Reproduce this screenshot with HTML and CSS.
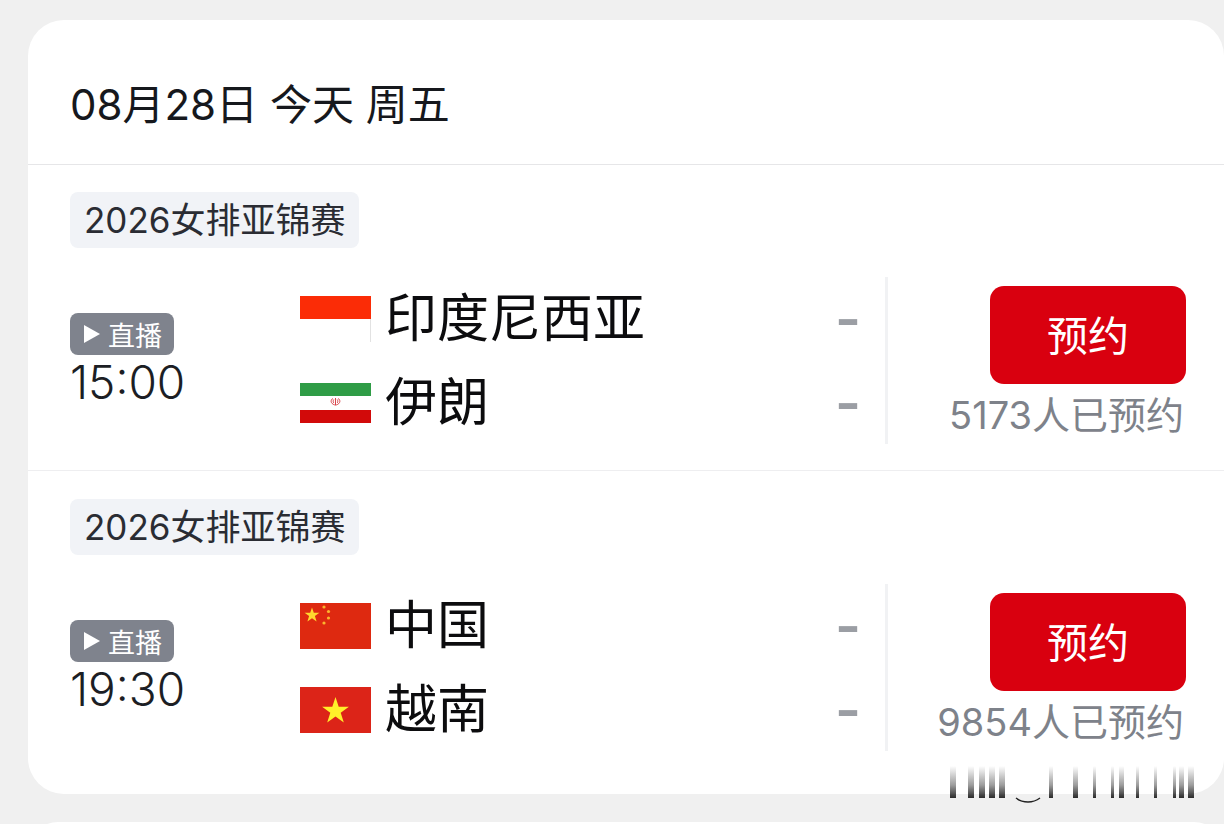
FILE: index.html
```html
<!DOCTYPE html>
<html lang="zh">
<head>
    <meta charset="UTF-8">
    <meta name="viewport" content="width=device-width, initial-scale=1.0">
    <title>赛程</title>
    <link rel="stylesheet" href="styles.css">
</head>
<body>

<section class="card">
    <header class="day-title">08月28日 今天 周五</header>

    <div class="match-block">
        <span class="tag">2026女排亚锦赛</span>
        <div class="match">
            <div class="time-col">
                <span class="live">
                    <svg class="live-icon" viewBox="0 0 16 18"><polygon points="0,0 16,9 0,18"/></svg>直播
                </span>
                <div class="time">15:00</div>
            </div>
            <div class="teams">
                <div class="team">
                    <svg class="flag" viewBox="0 0 71 46">
                        <rect width="71" height="23" fill="#fb2c06"/>
                        <rect x="70" y="23" width="1" height="23" fill="#e2e2e2"/>
                    </svg>
                    <span class="team-name">印度尼西亚</span>
                    <span class="score">-</span>
                </div>
                <div class="team">
                    <svg class="flag" viewBox="0 0 71 46">
                        <rect y="3" width="71" height="13" fill="#2f9c46"/>
                        <rect y="30" width="71" height="13" fill="#d20a0a"/>
                        <path d="M33 18.500c-2.500 1-3 5 1.800 6.500M38 18.500c2.500 1 3 5-1.800 6.500M35.500 18v7.500M33.800 19.500c-.8 1-.8 2.500 0 3.500M37.200 19.500c.8 1 .8 2.500 0 3.500" fill="none" stroke="#d9434a" stroke-width="1"/>
                    </svg>
                    <span class="team-name">伊朗</span>
                    <span class="score">-</span>
                </div>
            </div>
            <div class="book-col">
                <button class="book-btn">预约</button>
                <div class="book-count">5173人已预约</div>
            </div>
        </div>
    </div>

    <div class="match-block">
        <span class="tag">2026女排亚锦赛</span>
        <div class="match">
            <div class="time-col">
                <span class="live">
                    <svg class="live-icon" viewBox="0 0 16 18"><polygon points="0,0 16,9 0,18"/></svg>直播
                </span>
                <div class="time">19:30</div>
            </div>
            <div class="teams">
                <div class="team">
                    <svg class="flag" viewBox="0 0 71 46">
                        <rect width="71" height="46" fill="#de2910"/>
                        <polygon points="12,4.500 13.800,9.800 19.400,9.800 14.900,13.100 16.600,18.400 12,15.200 7.400,18.400 9.100,13.100 4.600,9.800 10.200,9.800" fill="#ffd82e"/>
                        <circle cx="24" cy="4" r="1.600" fill="#fbb52e"/>
                        <circle cx="28.500" cy="8.500" r="1.600" fill="#fbb52e"/>
                        <circle cx="28.500" cy="15" r="1.600" fill="#fbb52e"/>
                        <circle cx="24" cy="20" r="1.600" fill="#fbb52e"/>
                    </svg>
                    <span class="team-name">中国</span>
                    <span class="score">-</span>
                </div>
                <div class="team">
                    <svg class="flag" viewBox="0 0 71 46">
                        <rect width="71" height="46" fill="#dc2418"/>
                        <polygon points="35.500,10 38.700,19.700 48.900,19.700 40.700,25.700 43.800,35.400 35.500,29.400 27.200,35.400 30.300,25.700 22.100,19.700 32.300,19.700" fill="#fff02a"/>
                    </svg>
                    <span class="team-name">越南</span>
                    <span class="score">-</span>
                </div>
            </div>
            <div class="book-col">
                <button class="book-btn">预约</button>
                <div class="book-count">9854人已预约</div>
            </div>
        </div>
    </div>
</section>

<div class="next-peek"><div class="next-card"></div></div>

<svg class="watermark" width="250" height="42" viewBox="0 0 250 42">
    <defs>
        <linearGradient id="fade" x1="0" y1="0" x2="0" y2="1">
            <stop offset="0" stop-color="#222" stop-opacity="0"/>
            <stop offset="0.6" stop-color="#222" stop-opacity="0.45"/>
            <stop offset="1" stop-color="#222" stop-opacity="0.95"/>
        </linearGradient>
    </defs>
    <g fill="url(#fade)">
        <rect x="3" y="4" width="6" height="32"/>
        <rect x="21" y="4" width="6" height="32"/>
        <rect x="32" y="4" width="6" height="32"/>
        <rect x="42" y="4" width="6" height="32"/>
        <rect x="52" y="4" width="6" height="32"/>
        <rect x="102" y="4" width="4" height="32"/>
        <rect x="126" y="4" width="5" height="32"/>
        <rect x="146" y="4" width="3" height="32"/>
        <rect x="164" y="4" width="3" height="32"/>
        <rect x="172" y="4" width="5" height="32"/>
        <rect x="189" y="4" width="3" height="32"/>
        <rect x="207" y="4" width="3" height="32"/>
        <rect x="226" y="4" width="3" height="32"/>
        <rect x="232" y="4" width="5" height="32"/>
        <rect x="241" y="4" width="6" height="32"/>
    </g>
    <path d="M69 36c4 3 7 4 12 4s8-1 12-4" fill="none" stroke="#222" stroke-width="1.500"/>
</svg>

</body>
</html>
```

FILE: styles.css
```css
html, body {
    height: 100%;
}
body {
    margin: 0;
    background-color: #f0f0f0;
    font-family: Inter, "Noto Sans CJK SC", sans-serif;
    overflow: hidden;
    position: relative;
}
.card {
    margin: 20px 0 0 28px;
    height: 774px;
    box-sizing: border-box;
    background: white;
    border-radius: 36px;
}
.next-peek {
    height: 2px;
    margin-top: 28px;
    overflow: hidden;
}
.next-card {
    margin-left: 28px;
    height: 60px;
    background: white;
    border-radius: 36px;
}
.day-title {
    height: 145px;
    box-sizing: border-box;
    padding: 60px 0 0 42px;
    font-size: 42px;
    line-height: 50px;
    color: #16181d;
    border-bottom: 1px solid #e6e6e8;
}
.match-block {
    padding: 27px 0 25px 42px;
}
.match-block + .match-block {
    padding-top: 28px;
    border-top: 1px solid #eeeef0;
}
.tag {
    display: block;
    width: fit-content;
    height: 56px;
    padding: 0 14px;
    box-sizing: border-box;
    background: #f1f3f7;
    border-radius: 8px;
    font-size: 35px;
    line-height: 56px;
    color: #2a2c33;
}
.match {
    display: flex;
    margin-top: 29px;
    height: 168px;
}
.time-col {
    width: 230px;
    padding-top: 36px;
    box-sizing: border-box;
}
.live {
    display: flex;
    align-items: center;
    width: 104px;
    height: 42px;
    box-sizing: border-box;
    padding-left: 14px;
    background: #7f838d;
    border-radius: 8px;
    color: white;
    font-size: 27px;
}
.live-icon {
    width: 16px;
    height: 18px;
    margin-right: 8px;
    fill: white;
}
.time {
    font-size: 46px;
    line-height: 54px;
    font-weight: 300;
    color: #1c1e24;
}
.teams {
    width: 585px;
}
.team {
    display: flex;
    align-items: center;
    height: 84px;
}
.flag {
    width: 71px;
    height: 46px;
    margin-right: 14px;
}
.team-name {
    font-size: 52px;
    line-height: 84px;
    color: #0c0c0e;
}
.score {
    margin-left: auto;
    margin-right: 24px;
    font-size: 56px;
    font-weight: 600;
    line-height: 80px;
    color: #9b9ea4;
}
.book-col {
    flex: 1;
    display: flex;
    flex-direction: column;
    align-items: flex-end;
    padding: 9px 38px 0 0;
    border-left: 3px solid #f1f2f4;
    height: 167px;
    box-sizing: border-box;
}
.book-btn {
    width: 196px;
    height: 98px;
    padding: 0 0 4px;
    border: none;
    border-radius: 14px;
    background: #d9000f;
    color: white;
    font-family: inherit;
    font-size: 41px;
}
.book-count {
    margin: 11px 2px 0 0;
    font-size: 38px;
    line-height: 40px;
    color: #7e828a;
}
.watermark {
    position: absolute;
    left: 947px;
    top: 762px;
}
```
